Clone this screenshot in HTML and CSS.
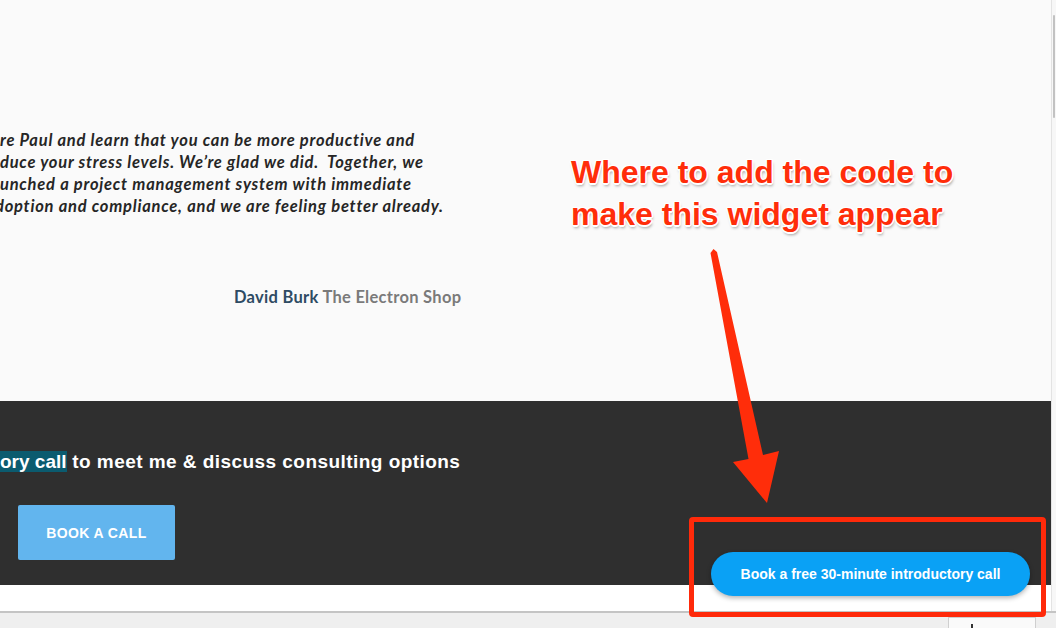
FILE: index.html
```html
<!DOCTYPE html>
<html>
<head>
<meta charset="utf-8">
<link rel="stylesheet" href="styles.css">
</head>
<body>
<div class="page">
  <div class="viewport">
    <div class="main">
      <section class="testimonial">
        <div class="quote">
          <div class="qline">re Paul and learn that you can be more productive and</div>
          <div class="qline">duce your stress levels. We’re glad we did.&nbsp; Together, we</div>
          <div class="qline">unched a project management system with immediate</div>
          <div class="qline shift">doption and compliance, and we are feeling better already.</div>
        </div>
        <div class="attrib"><span class="name">David Burk</span> <span class="company">The Electron Shop</span></div>
      </section>
      <section class="cta">
        <h2 class="cta-title"><span class="sel">ory call</span> to meet me &amp; discuss consulting options</h2>
        <a class="book-btn">BOOK A CALL</a>
      </section>
      <div class="band"></div>
    </div>
    <div class="scroll"><div class="thumb"></div></div>
  </div>
  <div class="statusbar"><div class="tab"><span class="tick"></span></div></div>

  <button class="widget">Book a free 30-minute introductory call</button>
  <div class="redbox"></div>
  <div class="note">Where to add the code to<br>make this widget appear</div>
  <svg class="arrow" width="1056" height="628" viewBox="0 0 1056 628">
    <polygon points="710.5,253 713.5,249 717,252 763,455 779,451 767,503 733,462 748.5,459" fill="#ff2d0a"/>
  </svg>
</div>
</body>
</html>
```

FILE: styles.css
```css
html, body {
  margin: 0;
  padding: 0;
}
body {
  width: 1056px;
  height: 628px;
  overflow: hidden;
  background: #fafafa;
  font-family: "Liberation Sans", Arial, sans-serif;
}
.page {
  position: relative;
  width: 1056px;
  height: 628px;
  display: flex;
  flex-direction: column;
}
.viewport {
  display: flex;
  height: 611px;
}
.main {
  width: 1051px;
  display: flex;
  flex-direction: column;
}
.scroll {
  width: 4px;
  background: #f7f7f7;
  border-left: 1px solid #e3e3e3;
  padding-top: 15px;
  display: flex;
  justify-content: center;
}
.thumb {
  width: 2px;
  height: 103px;
  background: #c2c2c2;
  border-radius: 1px;
}
.testimonial {
  height: 401px;
  background: #fafafa;
  padding-top: 129px;
  box-sizing: border-box;
}
.quote {
  font-family: "Lato", "Open Sans", sans-serif;
  font-style: italic;
  font-weight: 700;
  font-size: 16.5px;
  line-height: 22px;
  color: #262626;
  letter-spacing: 0.76px;
}
.qline {
  white-space: nowrap;
}
.qline.shift {
  margin-left: -5px;
}
.attrib {
  margin-top: 69px;
  padding-left: 234px;
  font-family: "Lato", "Open Sans", sans-serif;
  font-weight: 700;
  font-size: 16.5px;
  line-height: 22px;
  letter-spacing: 0.28px;
}
.name {
  color: #2e4b63;
}
.company {
  color: #7a7a7a;
}
.cta {
  height: 184px;
  background: #2f2f2f;
  padding-top: 48px;
  box-sizing: border-box;
}
.cta-title {
  margin: 0;
  font-size: 19px;
  line-height: 25px;
  font-weight: 700;
  color: #ffffff;
  white-space: nowrap;
  letter-spacing: 0.45px;
}
.sel {
  background: #0b5b6f;
  letter-spacing: 0;
}
.book-btn {
  display: flex;
  align-items: center;
  justify-content: center;
  margin: 31px 0 0 18px;
  width: 157px;
  height: 55px;
  background: #62b5ee;
  border-radius: 2px;
  color: #ffffff;
  font-size: 14px;
  font-weight: 700;
  letter-spacing: 0.4px;
}
.band {
  flex: 1;
  background: #ffffff;
}
.statusbar {
  flex: 1;
  background: #efefef;
  border-top: 2px solid #c4c4c4;
  position: relative;
  display: flex;
  justify-content: flex-end;
  padding-right: 20px;
}
.tab {
  margin-top: 4px;
  width: 86px;
  background: #fafafa;
  border: 1px solid #cfcfcf;
  border-bottom: none;
  position: relative;
}
.tick {
  position: absolute;
  left: 22px;
  top: 6px;
  width: 2px;
  height: 4px;
  background: #333;
}
.widget {
  position: absolute;
  left: 711px;
  top: 552px;
  width: 319px;
  height: 44px;
  border: none;
  border-radius: 22px;
  background: #0aa1f5;
  color: #ffffff;
  font-family: "Liberation Sans", Arial, sans-serif;
  font-weight: 700;
  font-size: 14px;
  box-shadow: 0 2px 5px rgba(0, 0, 0, 0.3);
  padding: 0;
}
.redbox {
  position: absolute;
  left: 689px;
  top: 517px;
  width: 347px;
  height: 90px;
  border: 5px solid #ff2a0a;
  border-radius: 4px;
}
.note {
  position: absolute;
  left: 571px;
  top: 151px;
  font-family: "Liberation Sans", Arial, sans-serif;
  font-weight: 700;
  font-size: 32px;
  line-height: 42px;
  color: #ff2d0a;
  white-space: nowrap;
  text-shadow:
    1.5px 0 0 #fff, -1.5px 0 0 #fff, 0 1.5px 0 #fff, 0 -1.5px 0 #fff,
    1px 1px 0 #fff, -1px -1px 0 #fff, 1px -1px 0 #fff, -1px 1px 0 #fff,
    1px 3px 3px rgba(0, 0, 0, 0.35);
}
.arrow {
  position: absolute;
  left: 0;
  top: 0;
  pointer-events: none;
}
```
